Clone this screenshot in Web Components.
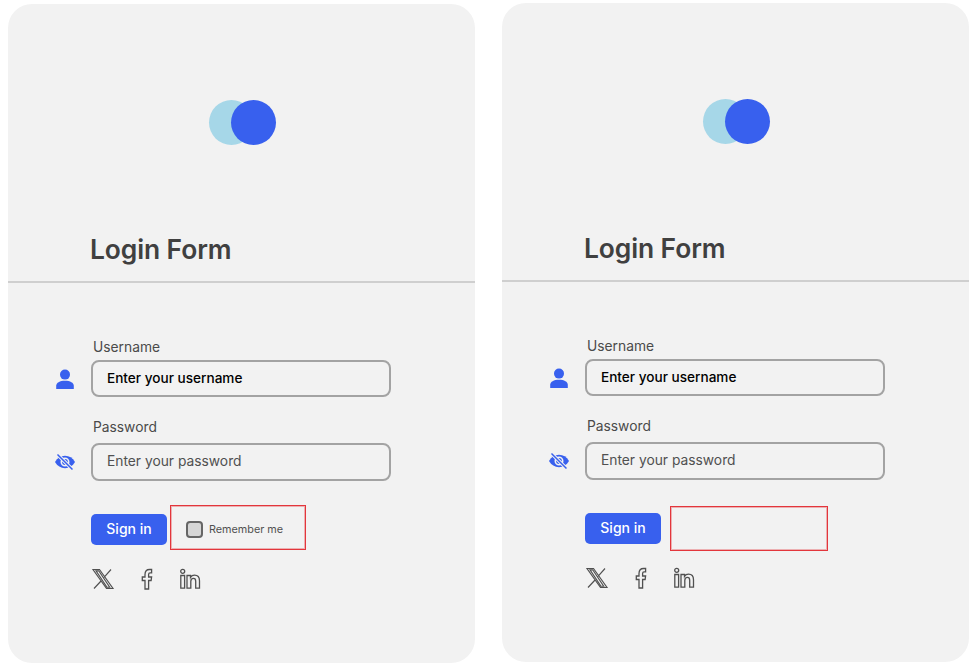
<!DOCTYPE html>
<html>
<head>
<meta charset="utf-8">
<title>Login Form</title>
<style>
  html, body { margin: 0; background: #fff; }
  body { font-family: Inter, "Liberation Sans", sans-serif; }
  .page { display: flex; gap: 27px; padding-left: 8px; align-items: flex-start; }
  .first { margin-top: 4px; }
  .second { margin-top: 3px; }
</style>
</head>
<body>
<div class="page">
  <login-card class="first">
    <form-field slot="fields" label="Username" text="Enter your username" strong>
      <svg slot="icon" width="20" height="20" viewBox="0 0 20 20"><circle cx="10" cy="5.6" r="5" fill="#3860ee"/><path d="M1.2 20v-3.2c0-3 3.6-5 8.8-5s8.800 2 8.800 5V20z" fill="#3860ee"/></svg>
    </form-field>
    <form-field slot="fields" label="Password" text="Enter your password">
      <svg slot="icon" width="22" height="20" viewBox="0 0 22 20"><path d="M1 10c2.300-4 5.800-6.200 10-6.200S18.700 6 21 10c-2.300 4-5.800 6.200-10 6.200S3.300 14 1 10z" fill="#3860ee"/><circle cx="11" cy="10" r="3.700" fill="none" stroke="#f2f2f2" stroke-width="1.600"/><path d="M3.500 2.500 18.500 17.500" stroke="#f2f2f2" stroke-width="3.400"/><path d="M3.500 2.500 18.500 17.500" stroke="#3860ee" stroke-width="1.500"/></svg>
    </form-field>
    <remember-box slot="remember" style="width:136px;margin-left:3px"><check-row>Remember me</check-row></remember-box>
  </login-card>
  <login-card class="second">
    <form-field slot="fields" label="Username" text="Enter your username" strong>
      <svg slot="icon" width="20" height="20" viewBox="0 0 20 20"><circle cx="10" cy="5.6" r="5" fill="#3860ee"/><path d="M1.2 20v-3.2c0-3 3.6-5 8.800-5s8.800 2 8.800 5V20z" fill="#3860ee"/></svg>
    </form-field>
    <form-field slot="fields" label="Password" text="Enter your password">
      <svg slot="icon" width="22" height="20" viewBox="0 0 22 20"><path d="M1 10c2.300-4 5.800-6.200 10-6.200S18.700 6 21 10c-2.300 4-5.800 6.200-10 6.200S3.300 14 1 10z" fill="#3860ee"/><circle cx="11" cy="10" r="3.700" fill="none" stroke="#f2f2f2" stroke-width="1.600"/><path d="M3.500 2.500 18.500 17.500" stroke="#f2f2f2" stroke-width="3.400"/><path d="M3.500 2.500 18.500 17.500" stroke="#3860ee" stroke-width="1.500"/></svg>
    </form-field>
    <remember-box slot="remember" style="width:158px;margin:2px 0 0 9px"></remember-box>
  </login-card>
</div>

<script>
class LoginCard extends HTMLElement {
  constructor() {
    super();
    this.attachShadow({mode: "open"});
    this.shadowRoot.innerHTML = `
      <style>
        :host { display: block; width: 467px; height: 659px; background: #f2f2f2; border-radius: 24px; color: #404040; }
        .top { height: 279px; box-sizing: border-box; padding-top: 96px; border-bottom: 2px solid #cfcfcf; }
        .logo { display: flex; justify-content: center; height: 45px; padding-left: 2px; }
        .logo i { width: 45px; height: 45px; border-radius: 50%; display: block; }
        .logo .a { background: #a6d7e8; }
        .logo .b { background: #3860ee; margin-left: -23px; }
        h1 { margin: 88px 0 0 82px; font-size: 26.4px; line-height: 32px; font-weight: 600; letter-spacing: -0.1px; }
        .body { padding: 54px 0 0 46px; }
        .fields { display: flex; flex-direction: column; gap: 20px; }
        .actions { display: flex; height: 45px; margin: 24px 0 0 37px; align-items: flex-start; }
        button { flex: none; width: 76px; height: 31px; margin-top: 9px; border: 0; border-radius: 5px; background: #3860ee; color: #fff; font: 500 14px Inter, "Liberation Sans", sans-serif; padding: 0 0 3px; }
        .social { display: flex; gap: 21px; margin: 18px 0 0 37px; align-items: center; }
        .social svg { display: block; fill: none; stroke: #505050; stroke-width: 1.300; }
        .social svg.x { stroke-width: 1.150; }
      </style>
      <div class="top">
        <div class="logo"><i class="a"></i><i class="b"></i></div>
        <h1>Login Form</h1>
      </div>
      <div class="body">
        <div class="fields"><slot name="fields"></slot></div>
        <div class="actions">
          <button type="button">Sign in</button>
          <slot name="remember"></slot>
        </div>
        <div class="social">
          <svg class="x" width="24" height="22" viewBox="0 0 24 22"><path d="M2 1.500h6.500l13.500 19h-6.500zM20 1.500 13 9.300M10.500 12.500 3 20.500M5 2.800h2.700l11 16.400h-2.700z"/></svg>
          <svg width="22" height="22" viewBox="0 0 22 22"><path d="M9 21v-8.500H6.300V9H9V6.500C9 3.300 10.800 1.500 13.600 1.500h2v3.300h-1.500c-1.100 0-1.500.5-1.500 1.700V9h3l-.5 3.500h-2.500V21z"/></svg>
          <svg width="22" height="22" viewBox="0 0 22 22"><circle cx="3.700" cy="3.300" r="2"/><path d="M1.800 7.500h3.800v12.700H1.800zM8 7.500h3.500v1.800c.8-1.300 2.200-2.100 4-2.100 3.300 0 5 1.900 5 5.500v7.500h-3.800v-7c0-1.900-.7-2.800-2.200-2.800s-2.700 1.100-2.700 3v6.800H8z"/></svg>
        </div>
      </div>
    `;
  }
}

class FormField extends HTMLElement {
  constructor() {
    super();
    this.attachShadow({mode: "open"});
    this.shadowRoot.innerHTML = `
      <style>
        :host { display: grid; grid-template-columns: 37px 300px; grid-template-rows: 19px auto; row-gap: 7px; }
        :host([strong]) { row-gap: 4px; }
        .label { grid-column: 2; padding: 1px 0 0 2px; height: 18px; font-size: 13.8px; line-height: 19px; color: #4a4a4a; }
        .icon { display: flex; align-items: center; justify-content: center; width: 30px; margin-left: -4px; }
        .box { height: 38px; box-sizing: border-box; border: 2px solid #a3a3a3; border-radius: 8px; padding: 0 0 2px 14px; display: flex; align-items: center; font-size: 13.8px; color: #505050; }
        :host([strong]) .box { height: 37px; color: #000; font-weight: 500; font-size: 13.6px; }
      </style>
      <div class="label"></div>
      <div class="icon"><slot name="icon"></slot></div>
      <div class="box"></div>
    `;
    this.shadowRoot.querySelector(".label").textContent = this.getAttribute("label");
    this.shadowRoot.querySelector(".box").textContent = this.getAttribute("text");
  }
}

// red marker box around the remember me option
class RememberBox extends HTMLElement {
  constructor() {
    super();
    this.attachShadow({mode: "open"});
    this.shadowRoot.innerHTML = `
      <style>
        :host { display: flex; flex: none; align-items: center; box-sizing: border-box; height: 45px; border: 1px solid #e3363c; box-shadow: inset 0 0 0 1px rgba(227, 54, 60, 0.35); padding: 3px 0 0 15px; }
      </style>
      <slot></slot>
    `;
  }
}

class CheckRow extends HTMLElement {
  constructor() {
    super();
    this.attachShadow({mode: "open"});
    this.shadowRoot.innerHTML = `
      <style>
        :host { display: flex; align-items: center; gap: 6px; font-size: 10.800px; color: #505050; }
        i { display: block; width: 17px; height: 17px; box-sizing: border-box; border: 2px solid #666; border-radius: 4px; background: #d6d6d6; }
      </style>
      <i></i><span><slot></slot></span>
    `;
  }
}

customElements.define("login-card", LoginCard);
customElements.define("form-field", FormField);
customElements.define("remember-box", RememberBox);
customElements.define("check-row", CheckRow);
</script>
</body>
</html>
